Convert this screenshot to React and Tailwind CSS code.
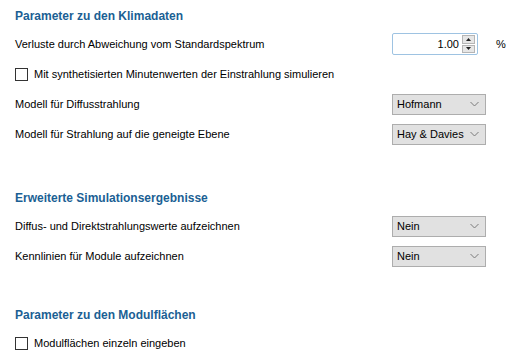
import React from "react";

function Heading({ children }) {
  return (
    <div className="h-[26px] flex items-center pl-[15px] font-bold text-[#1b5f94] text-[12px]">
      {children}
    </div>
  );
}

function Row({ label, children }) {
  return (
    <div className="h-[30px] flex items-center pl-[15px]">
      <div className="w-[377px]">{label}</div>
      {children}
    </div>
  );
}

function Select({ value }) {
  return (
    <div className="w-[94px] h-[21px] bg-[#e1e1e1] border border-[#adadad] flex items-center justify-between pl-[4px] pr-[6px] text-[#000]">
      <span>{value}</span>
      <svg width="9" height="6" viewBox="0 0 9 6">
        <path d="M0.5 1 L4.5 5 L8.5 1" fill="none" stroke="#7a7a7a" strokeWidth="1" />
      </svg>
    </div>
  );
}

function Check({ label }) {
  return (
    <div className="h-[30px] flex items-center pl-[15px]">
      <div className="w-[13px] h-[13px] border border-[#333] bg-white mr-[6px]" />
      <span>{label}</span>
    </div>
  );
}

function Spin() {
  return (
    <div className="flex items-center">
      <div className="w-[86px] h-[22px] border border-[#9ec3e2] rounded-[2px] bg-white flex items-center justify-end pr-[2px]">
        <span className="mr-[3px]">1.00</span>
        <div className="flex flex-col h-[18px] w-[13px] gap-[1px]">
          <div className="flex-1 bg-[#e6e6e6] border border-[#b5b5b5] flex items-center justify-center">
            <svg width="5" height="3" viewBox="0 0 5 3"><path d="M2.5 0 L5 3 L0 3 Z" fill="#222" /></svg>
          </div>
          <div className="flex-1 bg-[#e6e6e6] border border-[#b5b5b5] flex items-center justify-center">
            <svg width="5" height="3" viewBox="0 0 5 3"><path d="M0 0 L5 0 L2.5 3 Z" fill="#222" /></svg>
          </div>
        </div>
      </div>
      <span className="ml-[18px]">%</span>
    </div>
  );
}

export default function App() {
  return (
    <div className="w-[525px] h-[362px] bg-white text-[11px] text-[#000] pt-[3px] font-['Liberation_Sans',sans-serif]">
      <Heading>Parameter zu den Klimadaten</Heading>
      <Row label="Verluste durch Abweichung vom Standardspektrum">
        <Spin />
      </Row>
      <Check label="Mit synthetisierten Minutenwerten der Einstrahlung simulieren" />
      <Row label="Modell für Diffusstrahlung">
        <Select value="Hofmann" />
      </Row>
      <Row label="Modell für Strahlung auf die geneigte Ebene">
        <Select value="Hay & Davies" />
      </Row>
      <div className="h-[36px]" />
      <Heading>Erweiterte Simulationsergebnisse</Heading>
      <Row label="Diffus- und Direktstrahlungswerte aufzeichnen">
        <Select value="Nein" />
      </Row>
      <Row label="Kennlinien für Module aufzeichnen">
        <Select value="Nein" />
      </Row>
      <div className="h-[31px]" />
      <Heading>Parameter zu den Modulflächen</Heading>
      <Check label="Modulflächen einzeln eingeben" />
    </div>
  );
}
